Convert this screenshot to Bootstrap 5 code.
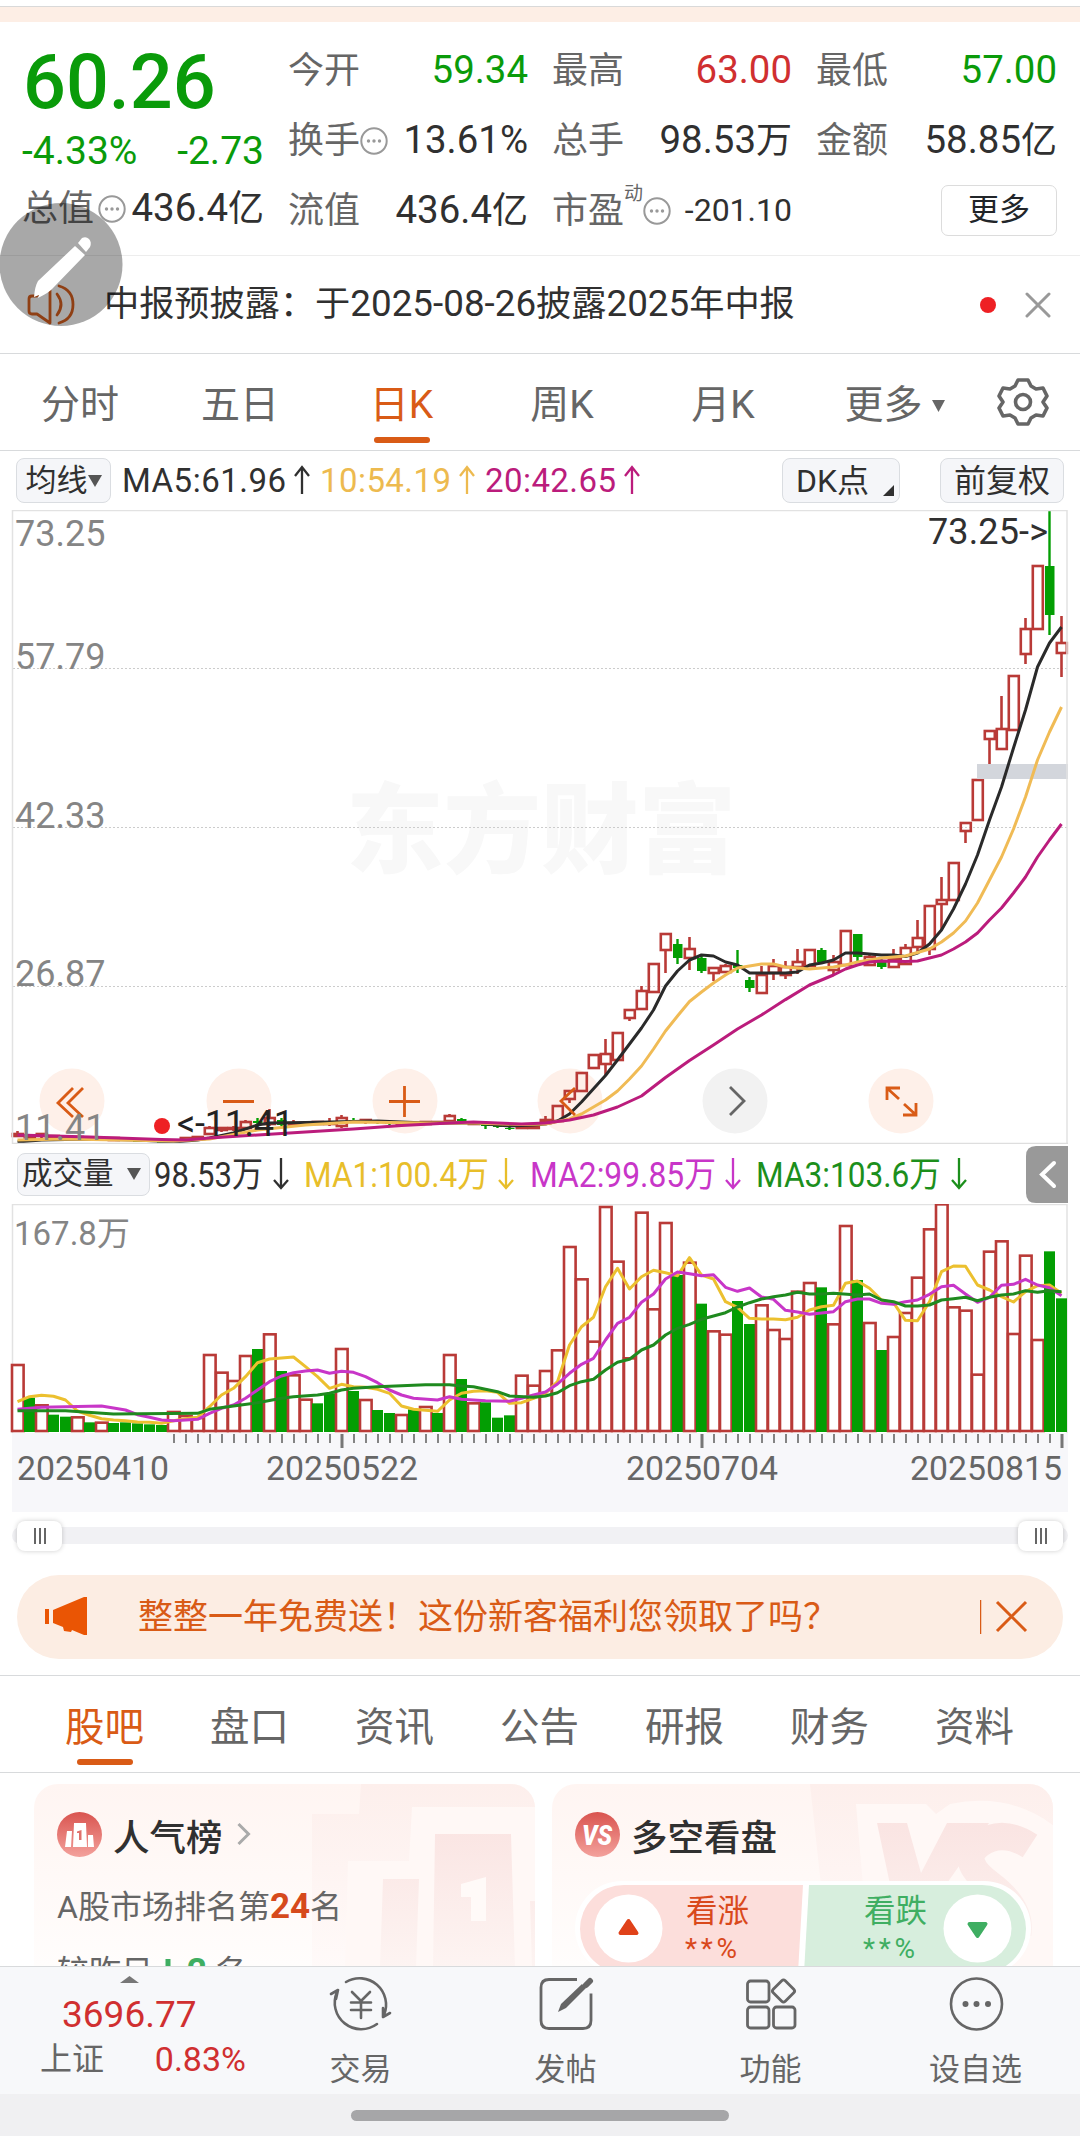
<!DOCTYPE html>
<html lang="zh-CN">
<head>
<meta charset="utf-8">
<meta name="viewport" content="width=device-width, initial-scale=1">
<title>日K</title>
<link rel="stylesheet" href="https://cdn.jsdelivr.net/npm/bootstrap@5.3.0/dist/css/bootstrap.min.css">
<style>
:root{--up:#d02f30;--down:#0a9b0a;--brand:#d95b16;--ink:#303030;--dim:#666;--rule:#d8dadc}
body{width:1080px;height:2136px;overflow:hidden;background:#fff;color:var(--ink);font-family:Roboto,"Noto Sans CJK SC",sans-serif;line-height:1;font-size:36px}
svg{display:block;flex:none}
svg text{font-family:Roboto,"Noto Sans CJK SC",sans-serif}
.c-up{color:var(--up)}.c-down{color:var(--down)}.c-dim{color:var(--dim)}.c-brand{color:var(--brand)}
.top-strip{height:22px;padding-top:6px}
.top-strip div{height:16px;border-top:1px solid #d9d9d9;background:#fdeee5}
.quote{height:234px;padding:13px 23px 0 22px;border-bottom:1px solid #ededed;gap:24px}
.quote-main{width:242px}
.stat-col{width:240px}
.stat-col:last-child{width:241px}
.price{font-size:75.5px;font-weight:500;height:94px;padding:1px 0 0 1px}
.q-row{height:70px;white-space:nowrap}
.q-row .lbl{padding-top:1px}
.val{font-size:38.400px}
.q-chg{height:44px}
.pct{font-size:39px}
.lbl{color:var(--dim);font-size:36px}
.val i{font-style:normal;font-size:36px}
.more-btn{width:116px;height:51px;border:1px solid #dcdcdc;border-radius:7px;font-size:31px;padding:0}
.sup-dong{font-size:19px;top:-9px}
.pe-val{font-size:32px}
.news{height:98px;border-bottom:1px solid var(--rule);padding:0 27px 0 0}
.news-txt{font-size:35.200px;white-space:nowrap}
.news-txt span{font-size:36.800px}
.news-dot{width:16px;height:16px;border-radius:50%;background:#ee2024}
.news-x{margin-left:29px}
.period{height:97px;border-bottom:1px solid var(--rule)}
.period .tab-i{font-size:39px;color:var(--dim);height:96px;position:relative;padding-top:7px}
.tab-i.on::after{content:"";position:absolute;left:50%;margin-left:-28px;width:56px;height:6px;border-radius:3px;background:var(--brand);bottom:7px}
.tab-a{width:160px}.tab-b{width:160px}.tab-c{width:163px}.tab-d{width:158px}.tab-e{width:164px}.tab-f{width:175px;padding-left:5px}
.ma-row{height:59px;font-size:33px;padding:0 16px}
.chip{height:45px;background:#f5f6f9;border:1px solid #dadde1;border-radius:8px}
.chip-ma{width:95px;font-size:31px}
.chip-dk{width:118px;font-size:32px;padding-left:13px}
.chip-fq{width:124px;font-size:32px;margin-left:40px}
.chip-vol{width:133px;height:43px;font-size:30.500px;padding-left:4px}
.corner{right:5px;bottom:6px}
.vol-row{height:60px;padding-left:17px}
.slider-row{height:63px;padding:15px 12px 0}
.s-track{height:17px;background:#f1f1f4;border-radius:9px}
.s-knob{width:45px;height:30px;border-radius:8px;background:#fff;box-shadow:0 0 5px rgba(0,0,0,.2);gap:3px;margin:0 5px}
.s-knob i{width:2px;height:16px;background:#666}
.promo{margin:0 17px;height:84px;border-radius:42px;background:#fcede3;color:var(--brand);font-size:35px}
.promo span{padding-top:1px}
.info-tabs{margin-top:16px;height:98px;border-top:1px solid var(--rule);border-bottom:1px solid var(--rule);padding:0 32px}
.info-tabs .tab-i{width:145px;font-size:39.5px;color:var(--dim);height:96px;position:relative;padding-top:8px}
.info-tabs .on,.period .on{color:var(--brand)}
.cards{height:193px;padding:11px 26px 0 34px;gap:17px;overflow:hidden}
.tile{height:182px;width:501px;border-radius:24px 24px 0 0;background:linear-gradient(#fff5f2,#fffdfc);position:relative;overflow:hidden}
.tile>.art{position:absolute;left:0;top:0}
.tile .body-c{position:relative;padding:26px 0 0 23px}
.tile-h{font-size:36.500px;font-weight:500;height:48px}
.tile-h span{margin-left:11px;padding-top:10px}
.chev{margin-left:14px}
.rank-line{font-size:32px;white-space:nowrap}
.rank-a{margin-top:31px}
.rank-b{margin-top:30px}
.rank-line b{color:#d64a1c;font-size:35px}
.rank-b b{color:#3fae62}
.bottombar{height:128px;background:#f7f8fa;border-top:1px solid var(--rule)}
.bb-idx{width:258px}
.bb-tri{margin:9px 0 0 120px}
.bb-num{font-size:37px;margin:13px 0 0 62px}
.bb-sub{margin:9px 12px 0 40px;font-size:32px}
.bb-sub .c-up{font-size:34px}
.bb-i{width:205px;font-size:31px;color:var(--dim);padding-top:9px;gap:22px}
.gesture{height:42px;background:#f0f0f2;padding-top:16px}
.gesture div{width:378px;height:11px;border-radius:6px;background:#a6a6a8}
.pen{position:absolute;left:0;top:203px}
</style>
<script src="https://cdn.jsdelivr.net/npm/bootstrap@5.3.0/dist/js/bootstrap.bundle.min.js"></script>
</head>
<body class="position-relative">
<svg width="0" height="0" class="position-absolute"><defs>
<symbol id="dots" viewBox="0 0 28 28"><circle cx="14" cy="14" r="12.7" fill="none" stroke="#999" stroke-width="2"/><g fill="#999"><circle cx="8.500" cy="14" r="1.7"/><circle cx="14" cy="14" r="1.7"/><circle cx="19.500" cy="14" r="1.7"/></g></symbol>
<linearGradient id="badgeG" x1="0" y1="0" x2="0" y2="1"><stop offset="0" stop-color="#d9544f"/><stop offset="1" stop-color="#f3a19c"/></linearGradient>
<linearGradient id="fadeA" gradientUnits="userSpaceOnUse" x1="0" y1="1820" x2="0" y2="1968"><stop offset="0" stop-color="#fae4e2"/><stop offset="1" stop-color="#fdf4f2"/></linearGradient>
<linearGradient id="fadeB" x1="0" y1="0" x2="0" y2="1"><stop offset="0" stop-color="#fdefec"/><stop offset="1" stop-color="#fffaf9"/></linearGradient>
</defs></svg>

<div class="top-strip"><div></div></div>

<section class="quote d-flex">
  <div class="quote-main">
    <div class="price c-down d-flex align-items-center">60.26</div>
    <div class="q-chg c-down pct d-flex justify-content-between align-items-center"><span>-4.33%</span><span>-2.73</span></div>
    <div class="q-row d-flex justify-content-between align-items-center"><span class="d-flex align-items-center lbl">总值<svg width="28" height="28" class="ms-1"><use href="#dots"/></svg></span><span class="val">436.4<i>亿</i></span></div>
  </div>
  <div class="stat-col">
    <div class="q-row d-flex justify-content-between align-items-center"><span class="lbl">今开</span><span class="val c-down">59.34</span></div>
    <div class="q-row d-flex justify-content-between align-items-center"><span class="lbl d-flex align-items-center">换手<svg width="28" height="28"><use href="#dots"/></svg></span><span class="val">13.61%</span></div>
    <div class="q-row d-flex justify-content-between align-items-center"><span class="lbl">流值</span><span class="val">436.4<i>亿</i></span></div>
  </div>
  <div class="stat-col">
    <div class="q-row d-flex justify-content-between align-items-center"><span class="lbl">最高</span><span class="val c-up">63.00</span></div>
    <div class="q-row d-flex justify-content-between align-items-center"><span class="lbl">总手</span><span class="val">98.53<i>万</i></span></div>
    <div class="q-row d-flex justify-content-between align-items-center"><span class="lbl d-flex align-items-center">市盈<span class="sup-dong position-relative align-self-start">动</span><svg width="28" height="28"><use href="#dots"/></svg></span><span class="pe-val">-201.10</span></div>
  </div>
  <div class="stat-col">
    <div class="q-row d-flex justify-content-between align-items-center"><span class="lbl">最低</span><span class="val c-down">57.00</span></div>
    <div class="q-row d-flex justify-content-between align-items-center"><span class="lbl">金额</span><span class="val">58.85<i>亿</i></span></div>
    <div class="q-row d-flex justify-content-end align-items-center"><button class="btn more-btn bg-white">更多</button></div>
  </div>
</section>

<section class="news d-flex align-items-center">
  <svg width="104" height="98" viewBox="0 256 104 98" fill="none" stroke="#d9601f" stroke-width="2.800" stroke-linecap="round" stroke-linejoin="round"><path d="M50 286v37l-13-9h-5q-3 0-3-3v-12q0-3 3-3h5z"/><path d="M57 294q8 10.500 0 21M59 286q14 4 14 18.500T59 323"/></svg>
  <div class="flex-fill news-txt">中报预披露：于<span>2025-08-26</span>披露<span>2025</span>年中报</div>
  <span class="news-dot"></span>
  <svg width="28" height="26" class="news-x" stroke="#999" stroke-width="3" stroke-linecap="round"><path d="M2 2L24 24M24 2L2 24"/></svg>
</section>

<nav class="period d-flex">
  <div class="tab-i tab-a d-flex align-items-center justify-content-center">分时</div>
  <div class="tab-i tab-b d-flex align-items-center justify-content-center">五日</div>
  <div class="tab-i tab-c on d-flex align-items-center justify-content-center">日K</div>
  <div class="tab-i tab-d d-flex align-items-center justify-content-center">周K</div>
  <div class="tab-i tab-e d-flex align-items-center justify-content-center">月K</div>
  <div class="tab-i tab-f d-flex align-items-center justify-content-center">更多<svg width="15" height="12" class="ms-2" fill="#666"><path d="M1 0h13L7.500 12z"/></svg></div>
  <svg width="95" height="96" viewBox="980 354 95 96" fill="none" stroke="#666" stroke-width="3.600" stroke-linejoin="round"><path d="M1018 380h10l3 6 5 3 7-1 4 8-4 6v0l4 6-4 8-7-1-5 3-3 6h-10l-3-6-5-3-7 1-4-8 4-6-4-6 4-8 7 1 5-3z"/><circle cx="1023" cy="402" r="7.500"/></svg>
</nav>

<div class="ma-row d-flex align-items-center">
  <span class="chip chip-ma d-inline-flex align-items-center justify-content-center">均线<svg width="14" height="12" fill="#555"><path d="M0 0h14L7 12z"/></svg></span>
  <svg width="560" height="59" viewBox="111 451 560 59" font-size="33"><g>
    <text x="122" y="492" fill="#303030" textLength="164">MA5:61.96</text><text x="320" y="492" fill="#edba4f" textLength="131">10:54.19</text><text x="485" y="492" fill="#bb1c7c" textLength="131">20:42.65</text></g>
    <g fill="none" stroke-width="2.300"><path stroke="#303030" d="M302 494V467M295 476l7-9 7 9"/><path stroke="#edba4f" d="M467 494V467M460 476l7-9 7 9"/><path stroke="#bb1c7c" d="M632 494V467M625 476l7-9 7 9"/></g>
  </svg>
  <span class="chip chip-dk d-inline-flex align-items-center position-relative ms-auto">DK点<svg width="11" height="11" class="position-absolute corner" fill="#303030"><path d="M11 0v11H0z"/></svg></span>
  <span class="chip chip-fq d-inline-flex align-items-center justify-content-center">前复权</span>
</div>

<svg id="kchart" width="1080" height="634" viewBox="0 510 1080 634"></svg>
<div class="vol-row d-flex align-items-center">
  <span class="chip chip-vol d-inline-flex align-items-center">成交量<svg width="14" height="12" class="ms-auto me-2" fill="#555"><path d="M0 0h14L7 12z"/></svg></span>
  <svg width="876" height="60" viewBox="150 1144 876 60" font-size="35">
    <g><text x="154" y="1187" fill="#303030" textLength="109" lengthAdjust="spacingAndGlyphs">98.53万</text><text x="304" y="1187" fill="#e8be2a" textLength="185" lengthAdjust="spacingAndGlyphs">MA1:100.4万</text><text x="530" y="1187" fill="#c836c8" textLength="186" lengthAdjust="spacingAndGlyphs">MA2:99.85万</text><text x="756" y="1187" fill="#1c8f1c" textLength="185" lengthAdjust="spacingAndGlyphs">MA3:103.6万</text></g>
    <g fill="none" stroke-width="2.300"><path stroke="#303030" d="M281 1158v30M274 1180l7 8 7-8"/><path stroke="#e8be2a" d="M506 1158v30M499 1180l7 8 7-8"/><path stroke="#c836c8" d="M733 1158v30M726 1180l7 8 7-8"/><path stroke="#1c8f1c" d="M959 1158v30M952 1180l7 8 7-8"/></g>
  </svg>
  <svg width="42" height="57"><path d="M10 0H42V57H10Q0 57 0 47V10Q0 0 10 0z" fill="#999"/><path d="M28 17L16 28.500L28 40" fill="none" stroke="#fff" stroke-width="4" stroke-linecap="round"/></svg>
</div>
<svg id="vchart" width="1080" height="308" viewBox="0 1204 1080 308"></svg>

<div class="slider-row">
  <div class="s-track d-flex align-items-center justify-content-between">
    <span class="s-knob d-flex align-items-center justify-content-center"><i></i><i></i><i></i></span>
    <span class="s-knob d-flex align-items-center justify-content-center"><i></i><i></i><i></i></span>
  </div>
</div>

<div class="promo d-flex align-items-center">
  <svg width="121" height="84" viewBox="17 1575 121 84" fill="#ea5504"><path d="M45 1609h4v15h-4zM53 1610L84 1597h3v38h-3l-12-5-1 2-7-1-1-4-10-4z"/></svg>
  <span class="flex-fill">整整一年免费送！这份新客福利您领取了吗？</span>
  <svg width="83" height="84" viewBox="980 1575 83 84" stroke="#d95b16" fill="none"><path d="M980.500 1600v34" stroke-width="1.500"/><path d="M997 1602l29 29M1026 1602l-29 29" stroke-width="3"/></svg>
</div>

<nav class="info-tabs d-flex">
  <div class="tab-i on d-flex align-items-center justify-content-center">股吧</div>
  <div class="tab-i d-flex align-items-center justify-content-center">盘口</div>
  <div class="tab-i d-flex align-items-center justify-content-center">资讯</div>
  <div class="tab-i d-flex align-items-center justify-content-center">公告</div>
  <div class="tab-i d-flex align-items-center justify-content-center">研报</div>
  <div class="tab-i d-flex align-items-center justify-content-center">财务</div>
  <div class="tab-i d-flex align-items-center justify-content-center">资料</div>
</nav>

<section class="cards d-flex">
  <div class="tile">
    <svg class="art" width="501" height="184" viewBox="34 1784 501 184">
      <path fill="url(#fadeB)" d="M361 1784H535V1968H312V1814H359z"/>
      <path fill="#fff8f6" d="M412 1807H535V1968H345L348 1861H409z"/>
      <path fill="url(#fadeA)" d="M435 1834h76l4 134h-82zM383 1879h36l-3 89h-36zM530 1901h30v67h-28z"/>
      <path fill="#fffaf8" d="M486 1877v44h-15v-24h-10v-13z"/>
    </svg>
    <div class="body-c">
      <div class="d-flex align-items-center tile-h"><svg width="45" height="45"><circle cx="22.500" cy="22.500" r="22.500" fill="url(#badgeG)"/><path fill="#fff" d="M17 11h12l1 24H16zM10 19h5l-1 16H8zM31 23h5l1 12h-6z"/><path fill="#e0706b" d="M24.500 18v10h-2.500v-7h-2v-1.500z"/></svg><span>人气榜</span><svg width="14" height="24" class="chev" fill="none" stroke="#aaa" stroke-width="3"><path d="M1.500 2l10 10-10 10"/></svg></div>
      <div class="c-dim rank-line rank-a">A股市场排名第<b>24</b>名</div>
      <div class="c-dim rank-line rank-b d-flex align-items-center">较昨日<svg width="22" height="30" class="ms-1" stroke="#3fae62" stroke-width="5" fill="none"><path d="M11 2v24M4 19l7 7 7-7"/></svg><b class="mx-2">2</b>名</div>
    </div>
  </div>
  <div class="tile">
    <svg class="art" width="502" height="184" viewBox="552 1784 502 184">
      <path fill="url(#fadeB)" d="M810 1784H1054V1968H830z"/>
      <path fill="#fff8f6" d="M856 1804h70l10 10 14-10q60-12 104 22v142H870z"/>
      <path fill="url(#fadeA)" d="M877 1823h30l14 50 26-50h42l-46 66h-52z"/>
      <path fill="none" stroke="url(#fadeA)" stroke-width="27" d="M1030 1846q-28-18-50-2t10 40 28 50"/>
      <path d="M620 1881H984a47 47 0 0 1 0 94H622a47 47 0 0 1 0-94z" fill="#fff"/><path d="M624 1885H803l-5 88H624a44 44 0 0 1 0-88z" fill="#fcdedb"/><path d="M809 1885H982a44 44 0 0 1 0 88H804z" fill="#d7eedd"/>
      <circle cx="628.500" cy="1928.500" r="34" fill="#fff"/><circle cx="977.500" cy="1928.500" r="34" fill="#fff"/>
      <path d="M628.500 1921l8 12h-16z" fill="#e0421a" stroke="#e0421a" stroke-width="4" stroke-linejoin="round"/><path d="M977.500 1936l8-12h-16z" fill="#3fae62" stroke="#3fae62" stroke-width="4" stroke-linejoin="round"/>
      <g font-size="31.500"><text x="686" y="1922" fill="#d9491c">看涨</text><text x="864" y="1922" fill="#3fae62">看跌</text></g>
      <g font-size="28"><text x="685" y="1958" fill="#d9491c" textLength="52">**%</text><text x="863" y="1958" fill="#3fae62" textLength="52">**%</text></g>
    </svg>
    <div class="body-c">
      <div class="d-flex align-items-center tile-h"><svg width="45" height="45"><circle cx="22.500" cy="22.500" r="22.500" fill="url(#badgeG)"/><text x="7" y="33" font-size="28" font-weight="900" font-style="italic" fill="#fff" textLength="30" lengthAdjust="spacingAndGlyphs">VS</text></svg><span>多空看盘</span></div>
    </div>
  </div>
</section>

<footer>
  <div class="bottombar d-flex">
    <div class="bb-idx d-flex flex-column">
      <svg width="19" height="7" class="bb-tri"><path d="M0 7L9.500 0 19 7z" fill="#777"/></svg>
      <span class="c-up bb-num">3696.77</span>
      <div class="d-flex align-items-center bb-sub"><span class="c-dim">上证</span><span class="c-up ms-auto">0.83%</span></div>
    </div>
    <div class="bb-i d-flex flex-column align-items-center"><svg width="64" height="56" viewBox="329 1976 64 56" fill="none" stroke="#666" stroke-width="2.600" stroke-linecap="round" stroke-linejoin="round"><path d="M346 1982a26.500 26.500 0 0 1 38 33M390 2013l-7 4v-9M377 2024a26.500 26.500 0 0 1-40-32M331 1994l7-4-2 9"/><path d="M352 1992l9 9 9-9M361 2001v17M351 2002.500h20M351 2010h20"/></svg>交易</div>
    <div class="bb-i d-flex flex-column align-items-center"><svg width="56" height="56" viewBox="538 1976 56 56" fill="none" stroke="#666" stroke-width="2.800"><path d="M577 1979.500h-28q-8 0-8 8v33q0 8 8 8h34q8 0 8-8v-27"/><path d="M558 2012l3-8 21-20 4 4-20 20z" fill="#666" stroke="none"/><path d="M586 1985l4-4" stroke-width="6" stroke-linecap="round"/></svg>发帖</div>
    <div class="bb-i d-flex flex-column align-items-center"><svg width="56" height="56" viewBox="743 1976 56 56" fill="none" stroke="#666" stroke-width="2.800"><rect x="747.500" y="1981" width="21.500" height="21" rx="3"/><rect x="747.500" y="2007" width="21.500" height="21" rx="3"/><rect x="773.500" y="2007" width="21.500" height="21" rx="3"/><rect x="775" y="1982.500" width="17" height="17" rx="2.500" transform="rotate(45 783.500 1991)"/></svg>功能</div>
    <div class="bb-i d-flex flex-column align-items-center"><svg width="56" height="56" viewBox="948 1976 56 56"><circle cx="976.500" cy="2004" r="25.500" fill="none" stroke="#666" stroke-width="2.600"/><g fill="#666"><circle cx="965.500" cy="2004" r="3"/><circle cx="976.500" cy="2004" r="3"/><circle cx="988" cy="2004" r="3"/></g></svg>设自选</div>
  </div>
  <div class="gesture"><div class="mx-auto"></div></div>
</footer>

<svg class="pen" width="123" height="123" viewBox="0 203 123 123"><circle cx="61" cy="264.500" r="61.500" fill="#000" fill-opacity=".34"/><path d="M75 246l10 9-32 33q-3 4-15 10l1-3-5 2q1-11 4-16z" fill="#fff"/><path d="M78 243l4-5q4-2 7 1t1 8l-4 5z" fill="#fff"/></svg>

<script>
const X=i=>18+12*i, RED='#b93a37', GREEN='#039e03';
// daily candles: index, high, body top, body bottom, low, 1 = rising
const K=[[0,1131,1134,1136,1137,1],[1,1134,1136,1138,1139,1],[2,1133,1134,1136,1138,1],[3,1135,1136,1138,1139,1],[4,1135,1137,1139,1139,0],[5,1136,1137,1139,1139,1],[6,1137,1138,1139,1140,1],[7,1137,1138,1139,1140,1],[8,1138,1138,1140,1140,1],[9,1138,1139,1141,1141,0],[10,1139,1140,1142,1142,0],[11,1139,1140,1142,1142,0],[12,1140,1141,1143,1143,0],[13,1140,1142,1144,1144,1],[14,1137,1138,1140,1140,1],[15,1136,1137,1138,1139,1],[16,1126,1128,1134,1135,1],[17,1127,1128,1130,1132,1],[18,1126,1128,1129,1131,1],[19,1120,1122,1128,1130,1],[20,1118,1121,1123,1126,0],[21,1109,1118,1124,1126,1],[22,1118,1120,1125,1126,0],[23,1120,1123,1125,1126,1],[24,1122,1123,1124,1125,1],[25,1121,1122,1124,1125,1],[26,1118,1123,1124,1126,1],[27,1115,1118,1126,1128,1],[28,1118,1120,1121,1122,0],[29,1119,1120,1121,1124,1],[30,1120,1121,1123,1124,0],[31,1121,1122,1124,1125,0],[32,1121,1123,1124,1125,1],[33,1122,1123,1125,1125,0],[34,1121,1122,1124,1125,1],[35,1121,1122,1123,1124,1],[36,1114,1116,1121,1121,1],[37,1118,1119,1121,1122,0],[38,1122,1123,1124,1124,1],[39,1124,1125,1126,1129,0],[40,1124,1126,1127,1128,0],[41,1127,1128,1129,1130,0],[42,1125,1127,1128,1128,1],[43,1125,1126,1128,1129,1],[44,1116,1120,1123,1124,1],[45,1106,1106,1121,1121,1],[46,1091,1091,1099,1103,1],[47,1073,1073,1091,1091,1],[48,1055,1055,1068,1068,1],[49,1039,1054,1064,1075,1],[50,1033,1033,1060,1060,1],[51,1010,1010,1018,1021,1],[52,986,991,1009,1009,1],[53,964,964,992,992,1],[54,934,934,950,973,1],[55,939,944,958,964,0],[56,937,949,958,970,1],[57,956,958,971,973,0],[58,967,968,973,981,1],[59,964,966,972,973,1],[60,950,965,968,973,0],[61,977,980,988,992,0],[62,966,975,993,993,1],[63,959,966,973,980,1],[64,961,967,975,979,1],[65,949,962,967,974,1],[66,950,950,966,966,1],[67,948,950,962,962,0],[68,955,962,970,975,1],[69,931,931,965,965,1],[70,934,934,957,961,0],[71,954,957,965,965,1],[72,957,960,967,969,0],[73,949,959,967,967,1],[74,944,948,964,964,1],[75,920,938,947,953,1],[76,906,906,949,955,1],[77,877,900,904,930,1],[78,863,863,900,900,1],[79,823,823,831,843,1],[80,780,780,820,820,1],[81,731,731,739,765,1],[82,696,729,749,749,1],[83,676,676,730,730,1],[84,618,629,654,664,1],[85,566,566,629,629,1],[86,510,566,615,635,0],[87,616,643,653,677,1]];
const MA5=[0,1142,1,1141,2,1140,6,1139,10,1140,13,1142,15,1140,16,1138,18,1133,20,1125,21,1123,24,1122.500,28,1121.500,30,1121,34,1123,38,1123,41,1126,43,1125,44,1124,45,1121,46,1114,47,1102,49,1075.500,50,1060,51,1044,52,1028,53,1010,54,986,55,971,56,960,57,955,58,956,59,962,60,965,61,973,64,973,65,972,66,965,67,963,68,960,69,953,70,953,71,954,72,955,73,955,74,956.500,75,953,76,944,77,930,78,909,79,884,80,855,81,820,82,787,83,748,84,710,85,667,86,643,87,627];
const MA10=[0,1140,4,1139,13,1141,16,1139,20,1130,24,1125,28,1122,34,1123,38,1123,42,1124.500,44,1124,46,1119,47,1114,49,1100,50,1091,51,1079,52,1066,53,1049,54,1031,55,1016,56,1001.500,57,992,58,983,59,975,60,968,61,966,62,964,63,964,64,967,65,968,66,969,67,968,68,967,69,965,70,962,71,960,72,958,73,957,74,956,75,952.500,76,949,77,942,78,933,79,921,80,903,81,880,82,857,83,829,84,797,85,760,86,732,87,707];
const MA20=[0,1135,6,1137,12,1139.500,14,1140,16,1138,20,1135,24,1132,28,1129,32,1125.500,36,1123,38,1122,42,1124,44,1123,46,1120,48,1115,50,1107,52,1096,54,1077.500,56,1060.500,58,1045,60,1029,62,1015,64,999.600,66,985,68,975,69,969,70,965,71,962,72,961,74,961.600,75,961,76,958,77,955,78,949,79,942,80,933,81,920,82,908,83,893,84,877,85,857,86,840,87,824];
const line=(a,c,f=v=>v)=>{let p='';for(let i=0;i<a.length;i+=2)p+=(X(a[i])-.5)+','+f(a[i+1]).toFixed(1)+' ';return `<polyline points="${p}" fill="none" stroke="${c}" stroke-width="3" stroke-linejoin="round"/>`};
let s='';
s+=`<text x="346" y="865" font-size="98" font-weight="900" fill="#f8f8f8" textLength="390" lengthAdjust="spacingAndGlyphs">东方财富</text>`;
for(const y of [668.5,827.5,986.5])s+=`<path d="M13 ${y}H1067" stroke="#ccc" stroke-dasharray="2 2"/>`;
[72,239,405,570,735,901].forEach((x,i)=>s+=`<circle cx="${x}" cy="1101" r="32.500" fill="${i==4?'#f2f2f2':'#fef0e9'}"/>`);
for(const [i,h,t,b,l,up] of K){const x=X(i)-.5,c=up?RED:GREEN;
 if(up){if(h<t)s+=`<path d="M${x} ${h}V${t}" stroke="${c}" stroke-width="2.6"/>`;if(l>b)s+=`<path d="M${x} ${b}V${l}" stroke="${c}" stroke-width="2.6"/>`;
  s+=`<rect x="${x-4.7}" y="${t}" width="10" height="${Math.max(1,b-t)}" fill="${b-t>3?'none':c}" stroke="${c}" stroke-width="2.6"/>`;}
 else s+=`<path d="M${x} ${h}V${l}" stroke="${c}" stroke-width="2.4"/><rect x="${x-4.5}" y="${t}" width="9.5" height="${b-t}" fill="${c}"/>`;}
s+=`<rect x="977" y="764" width="91" height="15" fill="#d3d6dc"/>`;
s+=line(MA5,'#2a2a2a')+line(MA10,'#f0bb55')+line(MA20,'#bb1c7c');
s+=`<path d="M12.500 1144V510.500H1067V1144" fill="none" stroke="#e2e2e2" stroke-width="1.500"/><path d="M12 1143.500H1068" stroke="#dedede" stroke-width="1.500"/>`;
s+=`<g fill="none" stroke="#d95b16" stroke-width="2.800"><path d="M73 1088L58 1103l15 14M83 1088L68 1103l15 14"/><path d="M223 1101.500h31M389 1101.500h31M404.500 1086v31"/><path d="M575 1088l-14 13 14 14"/><path stroke="#666" d="M730 1087l14 14-14 14"/><path d="M887 1100v-12h13M888 1089l11 10M916 1103v12h-13M915 1114l-11-10"/></g>`;
s+=`<g font-size="36" fill="#858585"><text x="15" y="545.500">73.25</text><text x="15" y="668.5">57.79</text><text x="15" y="827.5">42.33</text><text x="15" y="986">26.87</text><text x="15" y="1140">11.41</text></g><text x="928" y="544" font-size="36" fill="#303030" textLength="120">73.25-&gt;</text><text x="177" y="1136" font-size="36" fill="#222" textLength="117">&lt;-11.41</text><circle cx="162" cy="1126" r="8" fill="#ee2024"/>`;
kchart.innerHTML=s;

// volume bars: tops in third-pixels below y=1180; negative = falling day
const V=[555,-653,676,-704,-710,712,-727,728,-729,-727,-730,-733,-735,696,708,714,525,578,603,528,-507,463,-573,586,659,-670,-640,507,-633,660,-690,-699,705,-688,681,-699,525,-597,670,-667,-713,-706,587,617,573,511,201,298,485,81,245,535,98,388,129,-285,248,-371,454,464,-363,-432,376,450,477,335,309,-322,433,138,-300,429,-510,471,399,293,148,73,382,392,584,215,184,462,227,480,-214,-355];
const A=[665,650,646,649,660,693,706,716,720,722,726,727,730,722,716,712,680,645,625,590,548,537,534,531,560,590,625,613,620,622,628,640,678,688,691,694,660,640,634,632,637,670,668,655,640,605,495,440,412,320,265,327,290,271,278,287,233,285,297,365,382,415,417,417,419,412,390,380,376,310,303,325,360,368,421,422,365,275,258,259,315,330,350,366,335,317,315,340];
const B=[0,688,2,682,4,680,7,678,9,690,10,704,11,712,12,720,13,722,15,718,16,700,17,685,18,675,19,655,20,630,21,605,22,588,23,578,24,573,25,570,26,580,27,574,28,577,29,590,30,608,31,630,32,645,33,655,35,660,36,650,37,658,39,662,41,664,42,655,43,645,44,636,45,612,46,580,47,553,48,535,49,480,50,430,51,412,52,367,53,342,54,297,55,276,56,281,57,287,58,284,59,322,60,334,61,324,62,351,63,358,64,391,65,396,66,403,67,399,68,395,69,365,70,357,71,357,72,370,73,373,74,365,75,360,76,343,77,320,78,316,79,342,80,367,81,352,82,316,83,313,84,298,85,315,86,323,87,347];
const C=[0,692,4,692,8,702,15,700,16,688,18,678,20,668,22,655,23,650,25,645,26,640,27,630,28,625,30,620,34,614,36,614,37,618,38,620,40,635,41,648,43,652,44,648,45,638,46,617,47,605,48,598,49,570,50,547,51,538,52,510,53,495,54,465,55,445,56,433,57,418,58,408,59,398,60,381,61,368,62,357,63,350,64,345,65,337,66,342,67,342,68,340,70,345,71,342,72,360,73,365,74,378,75,378,76,375,77,360,78,356,79,352,80,362,81,352,82,345,83,342,84,332,85,337,86,332,87,335];
const Y=v=>1180+v/3;
s=`<rect x="12" y="1433" width="1056" height="80" fill="#f7f7fa"/><path d="M12.500 1433V1204.500H1067V1433" fill="none" stroke="#e2e2e2" stroke-width="1.500"/>`;
V.forEach((v,i)=>{const y=Y(Math.abs(v));s+=v<0?`<rect x="${X(i)-6}" y="${y}" width="11" height="${1432-y}" fill="${GREEN}"/>`:`<rect x="${X(i)-6}" y="${y}" width="11.600" height="${1431-y}" fill="#fff" stroke="${RED}" stroke-width="2.6"/>`;
 const big=i==27||i==57||i==87;if(i>12)s+=`<path d="M${X(i)} 1434v${big?14:9}" stroke="#777" stroke-width="${big?3:1.800}"/>`;});
s+=line(A.flatMap((v,i)=>[i,v]),'#ecc02f',Y)+line(B,'#c836c8',Y)+line(C,'#1f8a1f',Y);
s+=`<text x="14" y="1245" font-size="33" fill="#858585">167.8万</text><g font-size="33.800" fill="#666"><text x="17" y="1479.500">20250410</text><text x="266" y="1479.500">20250522</text><text x="626" y="1479.500">20250704</text><text x="910" y="1479.500">20250815</text></g>`;
vchart.innerHTML=s;
</script>
</body>
</html>
